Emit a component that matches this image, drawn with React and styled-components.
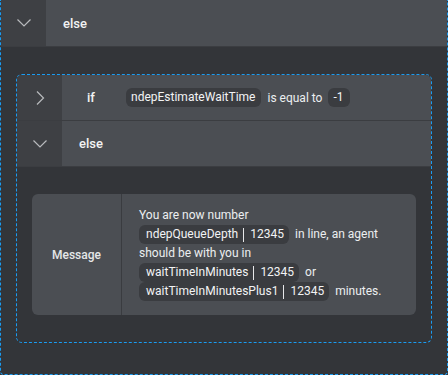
import React from "react";
import styled, { createGlobalStyle } from "styled-components";

const Global = createGlobalStyle`
  html, body {
    margin: 0;
    padding: 0;
    background: #333539;
  }
  body {
    font-family: Roboto, "Liberation Sans", sans-serif;
    color: #eceef0;
    overflow: hidden;
  }
`;

const Block = styled.div`
  border: 1px dashed #1a9cf2;
  border-top: ${(p) => (p.$open ? "none" : "1px dashed #1a9cf2")};
  border-radius: ${(p) => (p.$open ? "0 0 4px 4px" : "6px")};
  background: #333539;
  width: ${(p) => (p.$open ? "448px" : "auto")};
  height: ${(p) => (p.$open ? "375px" : "auto")};
  box-sizing: border-box;
`;

const Row = styled.div`
  display: flex;
  align-items: stretch;
  height: ${(p) => p.$h || 45}px;
  background: #4b4e53;
  border-bottom: 1px solid #3b3d41;
  border-radius: ${(p) => (p.$first ? "5px 5px 0 0" : "0")};
  overflow: hidden;
`;

const Toggle = styled.div`
  width: 45px;
  flex: none;
  background: #3e4044;
  display: flex;
  align-items: center;
  justify-content: center;
  color: #b8babd;
`;

const Keyword = styled.div`
  width: 58px;
  flex: none;
  display: flex;
  align-items: center;
  justify-content: center;
  font-size: 13px;
  font-weight: 500;
  color: #f2f3f4;
`;

const Condition = styled.div`
  display: flex;
  align-items: center;
  gap: 6px;
  padding-left: 6px;
  font-size: 12px;
  color: #eceef0;
`;

const Chip = styled.span`
  display: inline-flex;
  align-items: center;
  height: 19px;
  padding: ${(p) => (p.$var ? "0 5px 0 7px" : "0 6px 0 5px")};
  border-radius: 6px;
  background: #3a3c40;
  color: #f2f3f4;
  font-size: 12px;
  line-height: 19px;
  vertical-align: top;
  margin-right: ${(p) => (p.$mr ? p.$mr : 0)}px;
`;

const Divider = styled.span`
  display: inline-block;
  width: 1px;
  height: 14px;
  background: #e6e7e9;
  margin: 0 6px 0 5px;
`;

const Body = styled.div`
  padding: ${(p) => p.$pad};
`;

const Card = styled.div`
  display: flex;
  background: #4b4e53;
  border-radius: 6px;
  overflow: hidden;
`;

const CardLabel = styled.div`
  width: 89px;
  flex: none;
  display: flex;
  align-items: center;
  justify-content: center;
  border-right: 1px solid #3a3c40;
  font-size: 12px;
  font-weight: 500;
  color: #e4e6e8;
`;

const CardText = styled.div`
  padding: 12px 16px 14px 17px;
  font-size: 12px;
  line-height: 19px;
  color: #eceef0;
`;

const Line = styled.div`
  height: 19px;
  display: flex;
  align-items: center;
  white-space: nowrap;
`;

const Chevron = ({ dir }) => (
  <svg width="16" height="16" viewBox="0 0 16 16" fill="none">
    {dir === "down" ? (
      <path d="M1.5 4.5 L8 11 L14.5 4.5" stroke="#b8babd" strokeWidth="1.2" />
    ) : (
      <path d="M5 1.5 L11.5 8 L5 14.5" stroke="#b8babd" strokeWidth="1.2" />
    )}
  </svg>
);

const Var = ({ name, value, mr }) => (
  <Chip $var $mr={mr}>
    {name}
    <Divider />
    {value}
  </Chip>
);

export default function App() {
  return (
    <>
      <Global />
      <Block $open>
        <Row $h={46}>
          <Toggle>
            <Chevron dir="down" />
          </Toggle>
          <Keyword>else</Keyword>
        </Row>
        <Body $pad="27px 15px 29px 15px">
          <Block>
            <Row $first>
              <Toggle>
                <Chevron dir="right" />
              </Toggle>
              <Keyword>if</Keyword>
              <Condition>
                <Chip>ndepEstimateWaitTime</Chip>
                <span>is equal to</span>
                <Chip>-1</Chip>
              </Condition>
            </Row>
            <Row>
              <Toggle>
                <Chevron dir="down" />
              </Toggle>
              <Keyword>else</Keyword>
            </Row>
            <Body $pad="27px 15px 27px 15px">
              <Card>
                <CardLabel>Message</CardLabel>
                <CardText>
                  <Line>You are now number</Line>
                  <Line>
                    <Var name="ndepQueueDepth" value="12345" mr={6} />
                    in line, an agent
                  </Line>
                  <Line>should be with you in</Line>
                  <Line>
                    <Var name="waitTimeInMinutes" value="12345" mr={6} />
                    or
                  </Line>
                  <Line>
                    <Var name="waitTimeInMinutesPlus1" value="12345" mr={6} />
                    minutes.
                  </Line>
                </CardText>
              </Card>
            </Body>
          </Block>
        </Body>
      </Block>
    </>
  );
}
